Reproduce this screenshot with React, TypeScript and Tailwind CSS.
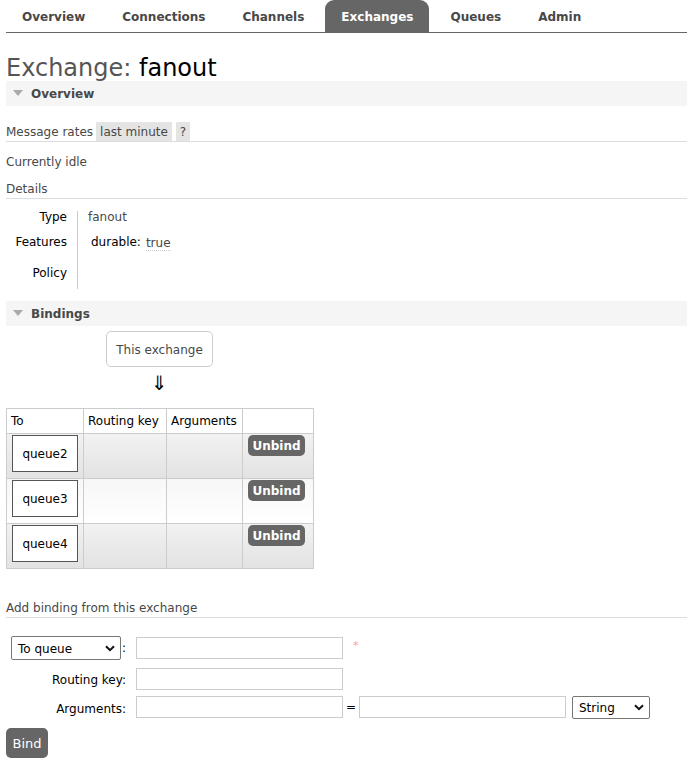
import React from "react";

const tabs = ["Overview", "Connections", "Channels", "Exchanges", "Queues", "Admin"];

function SectionHeader({ title }: { title: string }) {
  return (
    <div className="h-[25px] bg-[#f5f5f5] flex items-center">
      <svg width="10" height="7" viewBox="0 0 10 7" className="ml-[7px] mr-[8px]">
        <polygon points="0,0 10,0 5,6" fill="#aaaaaa" />
      </svg>
      <span className="font-bold text-[#484848] text-[12px] pt-[1px]">{title}</span>
    </div>
  );
}

function Chevron() {
  return (
    <svg width="10" height="7" viewBox="0 0 10 7">
      <path d="M1 1.2 L5 5.2 L9 1.2" fill="none" stroke="#111" strokeWidth="2" />
    </svg>
  );
}

function QueueRow({ name, alt }: { name: string; alt: boolean }) {
  const bg = alt
    ? "bg-gradient-to-b from-[#f7f7f7] to-[#ffffff]"
    : "bg-gradient-to-b from-[#f2f2f2] to-[#e2e2e2]";
  return (
    <tr className={`h-[45px] ${bg}`}>
      <td className="border border-[#cccccc] pl-[5px] pt-[1px] align-top">
        <div className="w-[66px] h-[37px] border border-[#555] bg-white flex items-center justify-center text-black pt-[1px]">
          {name}
        </div>
      </td>
      <td className="border border-[#cccccc]"></td>
      <td className="border border-[#cccccc]"></td>
      <td className="border border-[#cccccc] pl-[5px] pt-[1px] align-top">
        <div className="w-[57px] h-[21px] rounded-[5px] bg-[#666666] text-white font-bold flex items-center justify-center">
          Unbind
        </div>
      </td>
    </tr>
  );
}

export default function App() {
  return (
    <div
      className="w-[687px] h-[766px] bg-white text-[12px] text-[#484848] overflow-hidden"
      style={{ fontFamily: '"DejaVu Sans", Verdana, sans-serif' }}
    >
      {/* Nav */}
      <div className="ml-[6px] flex gap-[5px] h-[33px] border-b border-[#666666]">
        {tabs.map((t) => (
          <div
            key={t}
            className={
              t === "Exchanges"
                ? "px-4 h-[32px] pt-[2px] flex items-center font-bold bg-[#666666] text-white rounded-t-[9px]"
                : "px-4 h-[32px] pt-[2px] flex items-center font-bold text-[#484848]"
            }
          >
            {t}
          </div>
        ))}
      </div>

      <div className="ml-[6px]">
        {/* Title */}
        <div className="mt-[20px] h-[28px] leading-[31px] text-[24px] whitespace-nowrap">
          <span className="text-[#555555]">Exchange: </span>
          <span className="text-black">fanout</span>
        </div>

        <SectionHeader title="Overview" />

        {/* Message rates */}
        <div className="mt-[16px] h-[20px] border-b border-[#dddddd] flex items-start">
          <span className="leading-[21px] mr-[3px]">Message rates</span>
          <span className="h-[19px] leading-[21px] px-[4px] bg-[#e4e4e4]">last minute</span>
          <span className="h-[19px] leading-[21px] px-[4px] bg-[#e4e4e4] ml-[4px]">?</span>
        </div>

        <div className="mt-[9px] h-[20px] leading-[22px]">Currently idle</div>
        <div className="mt-[7px] h-[21px] leading-[22px] border-b border-[#dddddd]">Details</div>

        {/* Details table */}
        <div className="mt-[9px] flex">
          <div className="w-[71px] pr-[10px] text-right text-black">
            <div className="h-[18px] leading-[18px]">Type</div>
            <div className="mt-[7px] h-[18px] leading-[18px]">Features</div>
            <div className="mt-[13px] h-[18px] leading-[18px]">Policy</div>
          </div>
          <div className="mt-[3px] h-[78px] border-l border-[#cccccc] pl-[10px]">
            <div className="-mt-[3px]">
              <div className="h-[18px] leading-[18px]">fanout</div>
              <div className="mt-[7px] h-[18px] leading-[18px] pl-[3px] flex">
                <span className="text-black">durable:</span>
                <span className="ml-[5px] mt-[2px] leading-[16px] border-b border-dotted border-[#cccccc]">true</span>
              </div>
            </div>
          </div>
        </div>

        <div className="mt-[12px]">
          <SectionHeader title="Bindings" />
        </div>

        {/* This exchange */}
        <div className="ml-[100px] w-[107px]">
          <div className="mt-[5px] h-[36px] pt-[1px] border border-[#cccccc] rounded-[5px] flex items-center justify-center">
            This exchange
          </div>
          <div className="mt-[5px] h-[22px] leading-[22px] text-center text-[20px] text-black">⇓</div>
        </div>

        {/* Bindings table */}
        <table className="mt-[14px] border-collapse w-[307px] table-fixed text-black">
          <colgroup>
            <col className="w-[77px]" />
            <col className="w-[83px]" />
            <col className="w-[76px]" />
            <col className="w-[71px]" />
          </colgroup>
          <thead>
            <tr className="h-[25px]">
              <th className="border border-[#cccccc] text-left font-normal pl-[4px]">To</th>
              <th className="border border-[#cccccc] text-left font-normal pl-[4px] whitespace-nowrap">Routing key</th>
              <th className="border border-[#cccccc] text-left font-normal pl-[4px]">Arguments</th>
              <th className="border border-[#cccccc]"></th>
            </tr>
          </thead>
          <tbody>
            <QueueRow name="queue2" alt={false} />
            <QueueRow name="queue3" alt={true} />
            <QueueRow name="queue4" alt={false} />
          </tbody>
        </table>

        {/* Add binding */}
        <div className="mt-[28px] h-[21px] leading-[22px] border-b border-[#dddddd]">Add binding from this exchange</div>

        <div className="mt-[18px] text-black">
          <div className="flex items-center h-[24px]">
            <div className="w-[120px] flex justify-end items-center">
              <div className="w-[110px] h-[24px] border border-[#767676] rounded-[2px] bg-white flex items-center justify-between pl-[6px] pr-[5px]">
                <span className="pt-[1px]">To queue</span>
                <Chevron />
              </div>
              <span className="ml-[1px] w-[4px]">:</span>
            </div>
            <div className="ml-[10px] w-[207px] h-[22px] border border-[#cccccc]"></div>
            <span className="ml-[10px] self-start text-[#ff9999] text-[11px] leading-[14px] mt-[3px]">*</span>
          </div>

          <div className="mt-[8px] flex items-center h-[22px]">
            <div className="w-[120px] text-right pt-[2px]">Routing key:</div>
            <div className="ml-[10px] w-[207px] h-[22px] border border-[#cccccc]"></div>
          </div>

          <div className="mt-[6px] flex items-start h-[23px]">
            <div className="w-[120px] text-right leading-[22px] h-[22px] mt-[2px]">Arguments:</div>
            <div className="ml-[10px] w-[207px] h-[22px] border border-[#cccccc]"></div>
            <div className="w-[16px] text-center leading-[22px]">=</div>
            <div className="w-[207px] h-[22px] border border-[#cccccc]"></div>
            <div className="ml-[6px] w-[78px] h-[23px] border border-[#767676] rounded-[2px] bg-white flex items-center justify-between pl-[6px] pr-[5px]">
              <span className="pt-[1px]">String</span>
              <Chevron />
            </div>
          </div>

          <div className="mt-[9px] w-[42px] h-[30px] rounded-[5px] bg-[#666666] text-white flex items-center justify-center text-[13px] pt-[1px]">
            Bind
          </div>
        </div>
      </div>
    </div>
  );
}
